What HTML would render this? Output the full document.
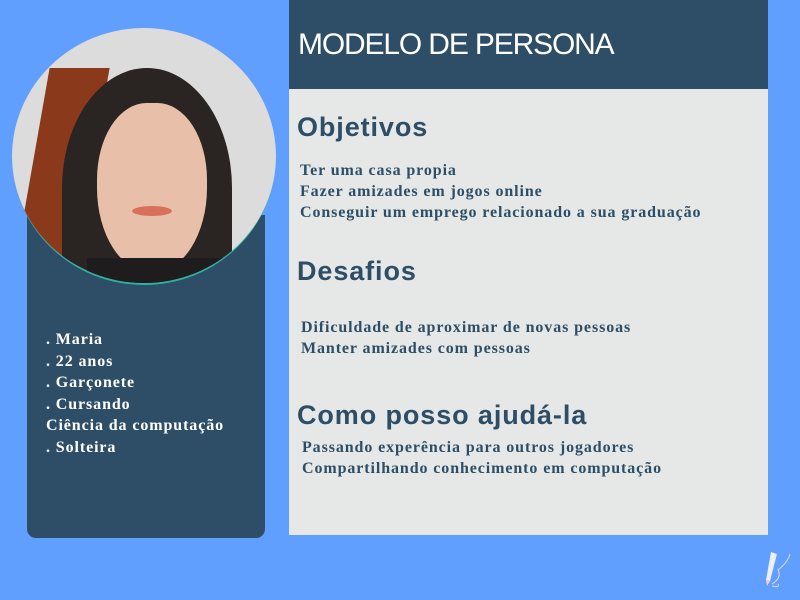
<!DOCTYPE html>
<html><head><meta charset="utf-8"><style>
body{margin:0;width:800px;height:600px;background:#609ffd;position:relative;overflow:hidden;font-family:"Liberation Serif",serif}
.lp{position:absolute;left:27px;top:215px;width:238px;height:323px;background:#2d4e66;border-radius:0 0 9px 9px}
.ph{position:absolute;left:12px;top:28px;width:264px;height:257px;border-radius:50%;overflow:hidden;background:#dcdcdc;border-bottom:2px solid #2bb3a0;box-sizing:border-box}
.hd{position:absolute;left:289px;top:0;width:479px;height:89px;background:#2d4e66}
.hd div{position:absolute;left:9px;top:28px;color:#fff;font:30px "Liberation Sans",sans-serif;letter-spacing:-1.15px}
.ct{position:absolute;left:289px;top:89px;width:479px;height:446px;background:#e6e8e7}
h2{position:absolute;margin:0;color:#2d4e66;font:bold 27px "Liberation Sans",sans-serif;letter-spacing:0.9px}
.t{position:absolute;color:#2d4e66;font-weight:bold;font-size:16px;line-height:21px;letter-spacing:0.9px}
.l{position:absolute;left:46px;top:329px;color:#fff;font-weight:bold;font-size:16px;line-height:21.5px;letter-spacing:0.9px}
</style></head><body>
<div class="lp"></div>
<div class="ph">
<div style="position:absolute;left:20px;top:40px;width:60px;height:200px;background:#8a3a1a;transform:skewX(-10deg)"></div>
<div style="position:absolute;left:50px;top:40px;width:170px;height:240px;background:#2a2422;border-radius:50% 50% 10% 10%"></div>
<div style="position:absolute;left:85px;top:75px;width:110px;height:170px;background:#e8bfa8;border-radius:45% 45% 50% 50%"></div>
<div style="position:absolute;left:120px;top:178px;width:40px;height:10px;background:#d8705c;border-radius:50%"></div>
<div style="position:absolute;left:75px;top:230px;width:190px;height:40px;background:#1e1c1d"></div>
</div>
<div class="l">. Maria<br>. 22 anos<br>. Garçonete<br>. Cursando<br>Ciência da computação<br>. Solteira</div>
<div class="hd"><div>MODELO DE PERSONA</div></div>
<div class="ct"></div>
<h2 style="left:297px;top:112px">Objetivos</h2>
<div class="t" style="left:300px;top:160px">Ter uma casa propia<br>Fazer amizades em jogos online<br>Conseguir um emprego relacionado a sua graduação</div>
<h2 style="left:297px;top:256px">Desafios</h2>
<div class="t" style="left:301px;top:317px">Dificuldade de aproximar de novas pessoas<br>Manter amizades com pessoas</div>
<h2 style="left:297px;top:400px">Como posso ajudá-la</h2>
<div class="t" style="left:302px;top:437px">Passando experência para outros jogadores<br>Compartilhando conhecimento em computação</div>
<svg style="position:absolute;left:760px;top:548px" width="36" height="44" viewBox="0 0 36 44"><path d="M11 4 L17 6 L10 33 L6 32 Z" fill="#eef" /><path d="M6 32 L10 33 L7 38 Z" fill="#fcc"/><path d="M12 36 Q22 30 18 22 Q28 14 30 6 M12 38 Q20 40 18 36" stroke="#dde" fill="none" stroke-width="1"/></svg>
</body></html>
